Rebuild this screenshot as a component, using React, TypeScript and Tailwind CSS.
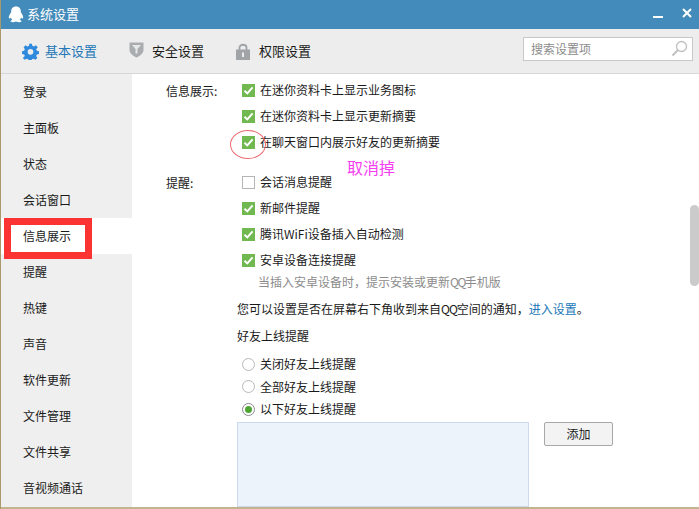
const FONT = "font-['Noto_Sans_CJK_SC','Liberation_Sans',sans-serif]";

const NAV = ["登录", "主面板", "状态", "会话窗口", "信息展示", "提醒", "热键", "声音", "软件更新", "文件管理", "文件共享", "音视频通话"];

function Check({ on = true }: { on?: boolean }) {
  if (!on) return <span className="block w-[13px] h-[13px] border border-[#b5b5b5] bg-white" />;
  return (
    <span className="flex items-center justify-center w-[13px] h-[13px] bg-[#71b851]">
      <svg width="11" height="11" viewBox="0 0 11 11">
        <path d="M1.5 5.8 L4.3 8.4 L9.6 2.4" fill="none" stroke="#fff" strokeWidth="2" />
      </svg>
    </span>
  );
}

function CheckRow({ text, on = true }: { text: string; on?: boolean }) {
  return (
    <div className="flex items-center h-[26px] pl-[110px]">
      <Check on={on} />
      <span className="ml-[5px] text-[12px] text-[#1a1a1a]">{text}</span>
    </div>
  );
}

function Radio({ text, on = false, h }: { text: string; on?: boolean; h: string }) {
  return (
    <div className={`flex items-center pl-[110px] ${h}`}>
      <span className={`flex items-center justify-center w-[13px] h-[13px] rounded-full border ${on ? "border-[#8a8a8a]" : "border-[#b8b8b8]"}`}>
        {on && <span className="block w-[7px] h-[7px] rounded-full bg-[#4fa534]" />}
      </span>
      <span className="ml-[5px] text-[12px] text-[#1a1a1a]">{text}</span>
    </div>
  );
}

export default function App() {
  return (
    <div className={`relative w-[699px] h-[509px] overflow-hidden bg-white flex flex-col border-l border-l-[#a89a6c] ${FONT}`}>
      <div className="flex items-center h-[29px] bg-[#438bba] shrink-0">
        <svg className="ml-[7px] mb-[1px]" width="16" height="17" viewBox="0 0 14 17" preserveAspectRatio="none">
          <path d="M7 0.5 C3.8 0.5 2.8 3 2.8 5.5 C2.8 6.6 2 7.5 1.3 9 C0.5 10.8 0.5 12.6 1.3 12.6 C1.8 12.6 2.2 12 2.5 11.5 C2.7 12.5 3.1 13.3 3.8 14 C2.6 14.4 2 15 2.2 15.6 C2.6 16.5 5.4 16.4 7 15.6 C8.6 16.4 11.4 16.5 11.8 15.6 C12 15 11.4 14.4 10.2 14 C10.9 13.3 11.3 12.5 11.5 11.5 C11.800 12 12.200 12.600 12.700 12.600 C13.500 12.600 13.500 10.800 12.700 9 C12 7.500 11.200 6.600 11.200 5.500 C11.200 3 10.200 0.500 7 0.500 Z" fill="#fff" />
        </svg>
        <span className="ml-[3px] mb-[2px] text-[13px] text-white">系统设置</span>
        <div className="ml-auto flex items-center">
          <span className="block w-[10px] h-[2px] mt-[5px] bg-white mr-[19px]" />
          <svg className="mr-[7px] mb-[3px]" width="10" height="10" viewBox="0 0 10 10">
            <path d="M1 1 L9 9 M9 1 L1 9" stroke="#fff" strokeWidth="2" />
          </svg>
        </div>
      </div>

      <div className="flex items-center h-[45px] bg-[#ecedec] border-b border-b-[#d6d7d6] shrink-0">
        <svg className="ml-[21px]" width="17" height="17" viewBox="0 0 24 24">
          <path d="M10 1h4l.6 3 2.3 1 2.6-1.700 2.800 2.800L20 8.700l1 2.300 3 .6v4l-3 .6-1 2.300 1.700 2.500-2.800 2.800-2.600-1.700-2.300 1-.6 3h-4l-.6-3-2.300-1-2.600 1.700-2.800-2.800L4 18.500l-1-2.300-3-.6v-4l3-.6 1-2.300-1.700-2.600 2.800-2.800 2.600 1.700 2.300-1z" fill="#2f8ade" />
          <circle cx="12" cy="12.500" r="4" fill="#ecedec" />
        </svg>
        <span className="ml-[6px] text-[13px] text-[#2277b8]">基本设置</span>
        <svg className="ml-[32px] mb-[3px]" width="15" height="17" viewBox="0 0 15 17">
          <path d="M0.500 1.500 L14.500 1.500 L14.500 9 C14.500 12.500 10.500 15 7.500 16.500 C4.500 15 0.500 12.500 0.500 9 Z" fill="#a9adb0" />
          <path d="M3 4 L12 4 L8.500 8 L8.500 12.500 L6.500 12.500 L6.500 8 Z" fill="#e6e7e7" />
        </svg>
        <span className="ml-[8px] text-[13px] text-[#1a1a1a]">安全设置</span>
        <svg className="ml-[32px]" width="14" height="17" viewBox="0 0 14 17">
          <path d="M3.500 7 V4.500 C3.500 0.800 10.500 0.800 10.500 4.500 V7" fill="none" stroke="#a0a4a7" strokeWidth="1.800" />
          <rect x="0" y="6.500" width="14" height="10.500" fill="#a0a4a7" />
          <rect x="6" y="9.500" width="2" height="4.500" fill="#ecedec" />
        </svg>
        <span className="ml-[9px] text-[13px] text-[#1a1a1a]">权限设置</span>
        <div className="ml-auto mr-[6px] mb-[5px] flex items-center justify-between w-[170px] h-[24px] bg-white border border-[#c8c8c8] pl-[7px] pr-[4px]">
          <span className="text-[12px] text-[#8c8c8c]">搜索设置项</span>
          <svg width="17" height="17" viewBox="0 0 17 17">
            <circle cx="10.500" cy="6.500" r="5" fill="none" stroke="#c0c0c0" strokeWidth="1.300" />
            <path d="M7 10 L1.500 15.500" stroke="#c0c0c0" strokeWidth="2" />
          </svg>
        </div>
      </div>

      <div className="flex flex-1 min-h-0">
        <div className="w-[131px] shrink-0 bg-[#efefef] overflow-hidden">
          {NAV.map((n) => (
            <div key={n} className={`flex items-center h-[36px] pl-[22px] text-[12px] text-[#1a1a1a] ${n === "信息展示" ? "bg-white" : ""}`}>
              {n}
            </div>
          ))}
        </div>

        <div className="relative flex-1 min-w-0 pt-[3px]">
          <div className="relative">
            <span className="absolute left-[34px] top-[5px] text-[12px] text-[#1a1a1a]">信息展示:</span>
            <CheckRow text="在迷你资料卡上显示业务图标" />
            <CheckRow text="在迷你资料卡上显示更新摘要" />
            <CheckRow text="在聊天窗口内展示好友的更新摘要" />
          </div>
          <div className="relative mt-[14px]">
            <span className="absolute left-[34px] top-[5px] text-[12px] text-[#1a1a1a]">提醒:</span>
            <CheckRow text="会话消息提醒" on={false} />
            <CheckRow text="新邮件提醒" />
            <CheckRow text="腾讯WiFi设备插入自动检测" />
            <CheckRow text="安卓设备连接提醒" />
          </div>
          <div className="pl-[126px] h-[18px] flex items-center text-[12px] text-[#8c8c8c]">
            <span>{"当插入安卓设备时\uFF0C提示安装或更新"}</span>
            <span className="tracking-[-1.5px]">QQ</span>
            <span>手机版</span>
          </div>
          <div className="pl-[105px] mt-[9px] h-[18px] flex items-center text-[12px] text-[#1a1a1a]">
            <span>您可以设置是否在屏幕右下角收到来自</span>
            <span className="tracking-[-1px]">QQ</span>
            <span>{"空间的通知\uFF0C"}</span>
            <span className="text-[#2277b8]">进入设置</span>
            <span>{"\u3002"}</span>
          </div>
          <div className="pl-[105px] mt-[9px] h-[18px] flex items-center text-[12px] text-[#1a1a1a]">好友上线提醒</div>
          <div className="mt-[8px]">
            <Radio text="关闭好友上线提醒" h="h-[22px]" />
            <Radio text="全部好友上线提醒" h="h-[23px]" />
            <Radio text="以下好友上线提醒" on h="h-[22px]" />
          </div>
          <div className="flex items-start pl-[105px] mt-[2px]">
            <div className="w-[292px] h-[85px] bg-[#ecf3fb] border border-[#ccd9ec]" />
            <div className="ml-[15px] flex items-center justify-center w-[69px] h-[24px] bg-[#f3f3f3] border border-[#a8a8a8] rounded-[2px] text-[12px] text-[#1a1a1a]">添加</div>
          </div>

          <div className="absolute right-0 top-[131px] w-[9px] h-[81px] rounded-full bg-[#cbcbcb]" />
          <div className="absolute left-[98px] top-[56px] w-[36px] h-[29px] rounded-[50%] border border-[#ee6a6f]" />
          <span className="absolute left-[215px] top-[81px] text-[16px] leading-[24px] text-[#f53cf0]">取消掉</span>
        </div>
      </div>

      <div className="h-[2px] bg-[#c2b58e] shrink-0 -mt-[2px] relative" />
      <div className="absolute left-[3px] top-[218px] w-[88px] h-[41px] border-[7px] border-[#fb3333]" />
    </div>
  );
}
